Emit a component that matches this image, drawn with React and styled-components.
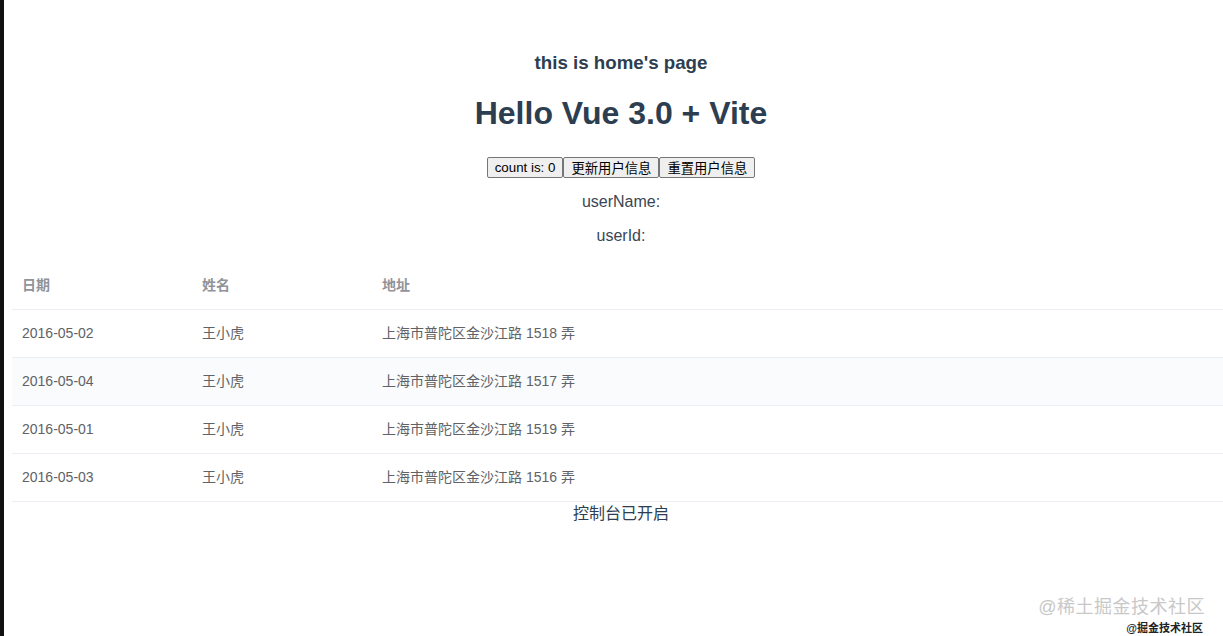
import React from 'react';
import styled, { createGlobalStyle } from 'styled-components';

const GlobalStyle = createGlobalStyle`
	html, body {
		margin: 0;
		padding: 0;
		background: #fff;
		overflow: hidden;
	}
	body {
		font-family: "Liberation Sans", Arial, "Noto Sans CJK SC", sans-serif;
	}
`;

const rows = [
	{ date: '2016-05-02', name: '王小虎', address: '上海市普陀区金沙江路 1518 弄' },
	{ date: '2016-05-04', name: '王小虎', address: '上海市普陀区金沙江路 1517 弄', hover: true },
	{ date: '2016-05-01', name: '王小虎', address: '上海市普陀区金沙江路 1519 弄' },
	{ date: '2016-05-03', name: '王小虎', address: '上海市普陀区金沙江路 1516 弄' },
];

const App = () => {
	return (
		<Shell>
			<GlobalStyle />
			<Stripe />
			<Content>
				<PageTitle>this is home's page</PageTitle>
				<Heading>Hello Vue 3.0 + Vite</Heading>
				<ButtonRow>
					<Button>count is: 0</Button>
					<Button>更新用户信息</Button>
					<Button>重置用户信息</Button>
				</ButtonRow>
				<Info>userName:</Info>
				<Info>userId:</Info>
				<Table>
					<thead>
						<tr>
							<HeadCell>日期</HeadCell>
							<HeadCell>姓名</HeadCell>
							<HeadCell $wide>地址</HeadCell>
						</tr>
					</thead>
					<tbody>
						{rows.map(row => (
							<Row key={row.address} $hover={row.hover}>
								<Cell>{row.date}</Cell>
								<Cell>{row.name}</Cell>
								<Cell>{row.address}</Cell>
							</Row>
						))}
					</tbody>
				</Table>
				<Footer>控制台已开启</Footer>
			</Content>
			<Watermark>@稀土掘金技术社区</Watermark>
			<Badge>@掘金技术社区</Badge>
		</Shell>
	);
};

const Shell = styled.div`
	position: relative;
	display: flex;
	min-height: 636px;
	width: 1223px;
	overflow: hidden;
`;

const Stripe = styled.div`
	flex: none;
	width: 4px;
	background: #111;
`;

const Content = styled.div`
	flex: none;
	width: 1218px;
	margin-left: 8px;
	padding-top: 52px;
	text-align: center;
	color: #2c3e50;
`;

const PageTitle = styled.h3`
	margin: 0;
	font-size: 18.72px;
	line-height: 22px;
	font-weight: 700;
`;

const Heading = styled.h1`
	margin: 21px 0 0;
	font-size: 32px;
	line-height: 37px;
	font-weight: 700;
`;

const ButtonRow = styled.div`
	display: flex;
	justify-content: center;
	margin-top: 25px;
	height: 21px;
`;

const Button = styled.button`
	height: 21px;
	padding: 0 7px;
	font-family: "Liberation Sans", Arial, "Noto Sans CJK SC", sans-serif;
	font-size: 13.33px;
	color: #000;
	background: #efefef;
	border: 1px solid #767676;
	border-radius: 2px;
`;

const Info = styled.p`
	margin: 15px 0 0;
	font-size: 16px;
	line-height: 18px;
	color: #3a4654;
	& + & {
		margin-top: 16px;
	}
`;

const Table = styled.table`
	width: 100%;
	margin-top: 17px;
	border-collapse: collapse;
	table-layout: fixed;
	text-align: left;
	font-size: 14px;
	color: #606266;
`;

const HeadCell = styled.th`
	box-sizing: border-box;
	width: ${p => (p.$wide ? 'auto' : '180px')};
	padding: 12px 10px;
	line-height: 23px;
	font-weight: 700;
	color: #909399;
	border-bottom: 1px solid #ebeef5;
`;

const Row = styled.tr`
	background: ${p => (p.$hover ? '#f9fbfc' : '#fff')};
`;

const Cell = styled.td`
	padding: 12px 10px;
	line-height: 23px;
	border-bottom: 1px solid #ebeef5;
`;

const Footer = styled.div`
	margin-top: 3px;
	font-size: 16px;
	line-height: 18px;
	color: #2c3e50;
`;

const Watermark = styled.div`
	position: absolute;
	right: 18px;
	bottom: 18px;
	font-size: 18px;
	color: #c8c8c8;
	letter-spacing: 0.5px;
`;

const Badge = styled.div`
	position: absolute;
	right: 20px;
	bottom: 1px;
	font-size: 11px;
	font-weight: 700;
	color: #222;
`;

export default App;
